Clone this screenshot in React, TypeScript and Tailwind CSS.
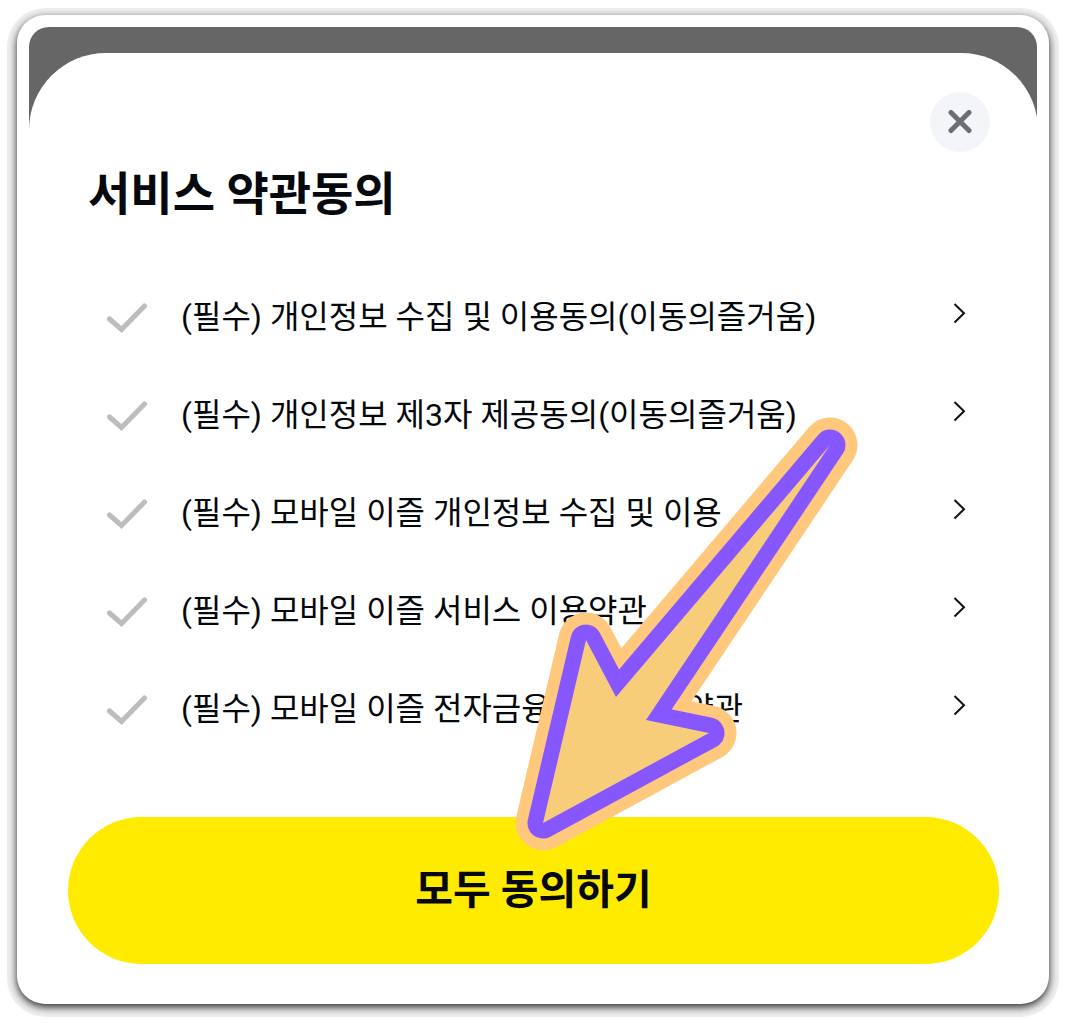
import React from 'react';

const terms = [
  { id: 'privacy', title: '(필수) 개인정보 수집 및 이용동의(이동의즐거움)' },
  { id: 'third-party', title: '(필수) 개인정보 제3자 제공동의(이동의즐거움)' },
  { id: 'ezl-privacy', title: '(필수) 모바일 이즐 개인정보 수집 및 이용' },
  { id: 'ezl-service', title: '(필수) 모바일 이즐 서비스 이용약관' },
  { id: 'ezl-finance', title: '(필수) 모바일 이즐 전자금융거래 이용 약관' }
];

const ARROW = 'M542 823 L585 640 L615 697 L829 445 L645 720 L708 733 Z';

const PointerArrow: React.FC = () => (
  <svg
    viewBox="513 416 347 436"
    className="absolute bottom-28 left-1/2 -ml-5 w-[347px] h-[436px] pointer-events-none"
    aria-hidden="true"
  >
    <path d={ARROW} fill="none" stroke="#ffc87d" strokeWidth="55" strokeLinejoin="round" />
    <path d={ARROW} fill="none" stroke="#8656ff" strokeWidth="31" strokeLinejoin="round" />
    <path d={ARROW} fill="#f8cd7a" />
  </svg>
);

const TermRow: React.FC<{ id: string; title: string }> = ({ id, title }) => (
  <li className="flex items-center justify-between h-[98px]">
    <div className="flex items-center">
      <span className="relative w-10 h-10 shrink-0">
        <input
          id={id}
          type="checkbox"
          className="peer block w-10 h-10 appearance-none cursor-pointer"
        />
        <svg
          viewBox="0 0 40 40"
          className="absolute inset-0 w-10 h-10 pointer-events-none text-[#bdbdbd] peer-checked:text-black"
          fill="none"
          stroke="currentColor"
          strokeWidth="5"
          strokeLinecap="round"
        >
          <path d="M2.5 22 L14.5 32.5 L37.5 9" />
        </svg>
      </span>
      <label htmlFor={id} className="pl-[34px] text-[32px] leading-10 cursor-pointer">
        {title}
      </label>
    </div>
    <button type="button" aria-label="약관 보기" className="w-8 h-10 shrink-0 cursor-pointer">
      <svg
        viewBox="0 0 32 40"
        className="w-8 h-10"
        fill="none"
        stroke="#111"
        strokeWidth="2"
      >
        <path d="M11.5 7 L21 16.2 L11.5 25.5" />
      </svg>
    </button>
  </li>
);

const App: React.FC = () => {
  return (
    <main className="bg-white px-[17px] pt-[15px] pb-[19px] text-[#05080c] font-[Roboto,'Noto_Sans_CJK_KR',sans-serif]">
      <div className="bg-white rounded-[28px] px-3 pt-3 pb-7 shadow-[0_3px_8px_rgba(0,0,0,0.85),0_3px_0_10px_#f0f0f0]">
        {/* Dimmed backdrop behind the sheet */}
        <div className="bg-[#666] rounded-t-[20px] pt-[26px] overflow-hidden">
          <section className="bg-white rounded-t-[77px] -mr-px pt-[39px] pb-3 px-[39px]">
            <div className="flex justify-end pr-[9px]">
              <button
                type="button"
                aria-label="닫기"
                className="w-15 h-15 rounded-full bg-[#f3f5f8] flex items-center justify-center cursor-pointer"
              >
                <svg
                  viewBox="0 0 24 24"
                  className="w-6 h-6"
                  fill="none"
                  stroke="#6b6e72"
                  strokeWidth="5"
                  strokeLinecap="round"
                >
                  <path d="M3 2.5 L21 20.5 M21 2.5 L3 20.5" />
                </svg>
              </button>
            </div>

            <h1 className="mt-[14px] pl-5 text-[46px] leading-[56px] font-bold">
              서비스 약관동의
            </h1>

            <ul className="mt-[46px] pl-[39px] pr-6">
              {terms.map((term) => (
                <TermRow key={term.id} id={term.id} title={term.title} />
              ))}
            </ul>

            <div className="relative mt-[59px]">
              <button
                type="button"
                className="w-full h-[147px] rounded-full bg-[#ffeb00] text-[41px] font-bold cursor-pointer"
              >
                모두 동의하기
              </button>
              <PointerArrow />
            </div>
          </section>
        </div>
      </div>
    </main>
  );
};

export default App;
